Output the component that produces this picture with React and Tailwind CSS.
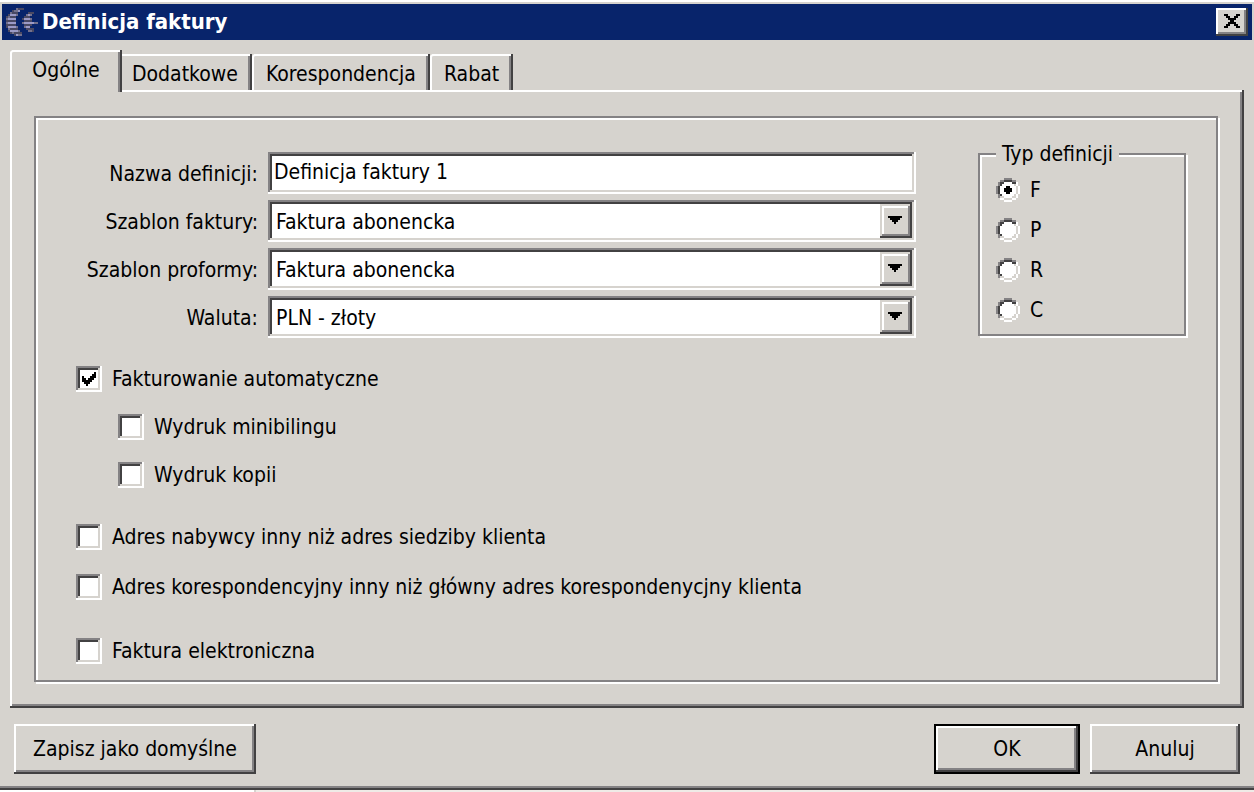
import React, { useState } from 'react';

const RAISED =
  'shadow-[inset_-2px_-2px_#424142,inset_2px_2px_#fff,inset_-4px_-4px_#848284]';
const SUNKEN =
  'shadow-[inset_-2px_-2px_#fff,inset_2px_2px_#848284,inset_-4px_-4px_#d6d3ce,inset_4px_4px_#424142]';
const ETCHED =
  'border-2 border-[#848284] shadow-[inset_2px_2px_#fff,2px_2px_#fff]';

const PALETTE = {
  g: '#848284',
  d: '#424142',
  l: '#d6d3ce',
  w: '#ffffff',
  k: '#000000',
  a: '#9c9ac6',
  b: '#73718c',
  c: '#4a4963',
};

const RADIO = [
  '....gggg....',
  '..ggddddgg..',
  '.gddwwwwddw.',
  '.gdwwwwwwlw.',
  'gdwwwwwwwwlw',
  'gdwwwwwwwwlw',
  'gdwwwwwwwwlw',
  'gdwwwwwwwwlw',
  '.gdwwwwwwlw.',
  '.gllwwwwllw.',
  '..wwllllww..',
  '....wwww....',
];

const DOT = ['.kk.', 'kkkk', 'kkkk', '.kk.'];

const CHECK = [
  '......k',
  '.....kk',
  'k...kkk',
  'kk.kkk.',
  'kkkkk..',
  '.kkk...',
  '..k....',
];

const CLOSE = [
  'kk....kk',
  '.kk..kk.',
  '..kkkk..',
  '...kk...',
  '..kkkk..',
  '.kk..kk.',
  'kk....kk',
];

const ARROW = ['kkkkkkk', '.kkkkk.', '..kkk..', '...k...'];

const LOGO = [
  '.....bccc.......',
  '...cbba.........',
  '..bccc.....ccc..',
  '.caaab....bab...',
  'cbccc....ccc....',
  'baaaa...caaab...',
  'ccccc....cccc...',
  'baaaa...baaaaabb',
  'ccccc....cccc...',
  'caaaab...baa....',
  '.bcccc....cccc..',
  '.caaaab....bbc..',
  '..cbcccc........',
  '....cabb........',
];

const PixelArt = ({ rows, className }) => (
  <svg
    width={rows[0].length * 2}
    height={rows.length * 2}
    viewBox={`0 0 ${rows[0].length} ${rows.length}`}
    shapeRendering="crispEdges"
    className={className}
    aria-hidden="true"
  >
    {rows.map((row, y) =>
      row.split('').map((p, x) =>
        p === '.' ? null : (
          <rect key={`${x}-${y}`} x={x} y={y} width="1" height="1" fill={PALETTE[p]} />
        )
      )
    )}
  </svg>
);

const Select = ({ id, options }) => (
  <div className="relative">
    <select
      id={id}
      className={`block w-full h-[42px] appearance-none bg-white pl-2 pr-10 pt-1 pb-0.5 outline-none ${SUNKEN}`}
    >
      {options.map((o) => (
        <option key={o}>{o}</option>
      ))}
    </select>
    <span className="pointer-events-none absolute right-1 top-1 bottom-1 w-8 flex items-center justify-center bg-[#d6d3ce] shadow-[inset_-2px_-2px_#424142,inset_2px_2px_#d6d3ce,inset_-4px_-4px_#848284,inset_4px_4px_#fff]">
      <PixelArt rows={ARROW} className="mb-0.5 mr-0.5" />
    </span>
  </div>
);

const Checkbox = ({ label, checked = false, className = '' }) => (
  <label className={`flex h-[26px] w-max items-center gap-2.5 ${className}`}>
    <span className="relative size-[26px]">
      <input
        type="checkbox"
        defaultChecked={checked}
        className={`peer block size-[26px] appearance-none bg-white ${SUNKEN}`}
      />
      <PixelArt
        rows={CHECK}
        className="pointer-events-none absolute left-1.5 top-1.5 hidden peer-checked:block"
      />
    </span>
    <span>{label}</span>
  </label>
);

const Radio = ({ label, value, onChange, selected }) => (
  <label className="flex h-10 items-center gap-2.5">
    <span className="relative size-6">
      <PixelArt rows={RADIO} className="absolute inset-0" />
      <input
        type="radio"
        name="typ"
        value={value}
        checked={selected}
        onChange={() => onChange(value)}
        className="absolute inset-0 appearance-none size-6 rounded-full outline-none"
      />
      {selected && <PixelArt rows={DOT} className="pointer-events-none absolute left-2 top-2" />}
    </span>
    <span>{label}</span>
  </label>
);

const Tab = ({ children, className = '' }) => (
  <button
    type="button"
    role="tab"
    aria-selected="false"
    className={`h-9 rounded-tl-sm px-3.5 pt-1 shadow-[inset_-2px_0_#424142,inset_0_2px_#fff,inset_2px_0_#fff,inset_-4px_0_#848284] ${className}`}
  >
    {children}
  </button>
);

const App = () => {
  const [type, setType] = useState('F');

  return (
    <div className="min-h-screen bg-[#d6d3ce] font-['DejaVu_Sans_Condensed','DejaVu_Sans',sans-serif] text-[21px] leading-7 text-black border-t-2 border-white">
      <header className="mx-0.5 mt-0.5 flex h-9 items-center bg-[#08246b] pl-1 pr-1">
        <PixelArt rows={LOGO} />
        <h1 className="ml-1 flex-1 text-[22px] font-bold text-white">Definicja faktury</h1>
        <button
          type="button"
          aria-label="Zamknij"
          className={`flex h-7 w-8 items-center justify-center bg-[#d6d3ce] pb-0.5 ${RAISED}`}
        >
          <PixelArt rows={CLOSE} />
        </button>
      </header>

      <main className="px-2.5 pt-2.5">
        <div role="tablist" className="flex items-end">
          <button
            type="button"
            role="tab"
            aria-selected="true"
            className="relative z-10 -mb-0.5 h-[42px] w-28 rounded-tl-sm bg-[#d6d3ce] pb-0.5 shadow-[inset_-2px_0_#424142,inset_2px_0_#fff,inset_0_2px_#fff,inset_-4px_0_#848284]"
          >
            Ogólne
          </button>
          <Tab className="-ml-1">Dodatkowe</Tab>
          <Tab>Korespondencja</Tab>
          <Tab>Rabat</Tab>
        </div>

        <section className={`pl-6 pr-[26px] py-[26px] ${RAISED}`}>
          <div className={`pl-10 pr-[30px] pt-[34px] pb-4 ${ETCHED}`}>
            <div className="flex items-start gap-[62px]">
              <div className="grid flex-1 grid-cols-[182px_1fr] items-center gap-x-2.5 gap-y-1.5">
                <label htmlFor="nazwa" className="pt-0.5 text-right">Nazwa definicji:</label>
                <input
                  id="nazwa"
                  type="text"
                  defaultValue="Definicja faktury 1"
                  className={`h-[42px] w-full bg-white pl-1.5 pr-2 pb-0.5 outline-none ${SUNKEN}`}
                />
                <label htmlFor="szablon-faktury" className="pt-0.5 text-right">Szablon faktury:</label>
                <Select id="szablon-faktury" options={['Faktura abonencka']} />
                <label htmlFor="szablon-proformy" className="pt-0.5 text-right">Szablon proformy:</label>
                <Select id="szablon-proformy" options={['Faktura abonencka']} />
                <label htmlFor="waluta" className="pt-0.5 text-right">Waluta:</label>
                <Select id="waluta" options={['PLN - złoty']} />
              </div>

              <fieldset className={`-mt-3 w-52 px-4 pt-0.5 pb-1 ${ETCHED}`}>
                <legend className="bg-[#d6d3ce] px-1.5">Typ definicji</legend>
                {['F', 'P', 'R', 'C'].map((t) => (
                  <Radio key={t} label={t} value={t} selected={type === t} onChange={setType} />
                ))}
              </fieldset>
            </div>

            <div className="mt-7 flex flex-col">
              <Checkbox label="Fakturowanie automatyczne" checked />
              <Checkbox label="Wydruk minibilingu" className="ml-[42px] mt-[22px]" />
              <Checkbox label="Wydruk kopii" className="ml-[42px] mt-[22px]" />
              <Checkbox label="Adres nabywcy inny niż adres siedziby klienta" className="mt-9" />
              <Checkbox
                label="Adres korespondencyjny inny niż główny adres korespondenycjny klienta"
                className="mt-6"
              />
              <Checkbox label="Faktura elektroniczna" className="mt-[38px]" />
            </div>
          </div>
        </section>
      </main>

      <footer className="flex items-center gap-2.5 px-3.5 pb-3 pt-4">
        <button type="button" className={`mr-auto h-[50px] w-[242px] ${RAISED}`}>
          Zapisz jako domyślne
        </button>
        <button
          type="submit"
          className={`h-[50px] w-[146px] border-2 border-black ${RAISED}`}
        >
          OK
        </button>
        <button type="button" className={`h-[50px] w-[150px] ${RAISED}`}>
          Anuluj
        </button>
      </footer>
      <div className="h-1 border-t-2 border-[#848284] bg-[#424142]" />
      <div className="flex h-0.5 bg-[#efebe7]">
        <div className="w-[254px] bg-white" />
        <div className="w-0.5 bg-[#d6d3ce]" />
      </div>
    </div>
  );
};

export default App;
